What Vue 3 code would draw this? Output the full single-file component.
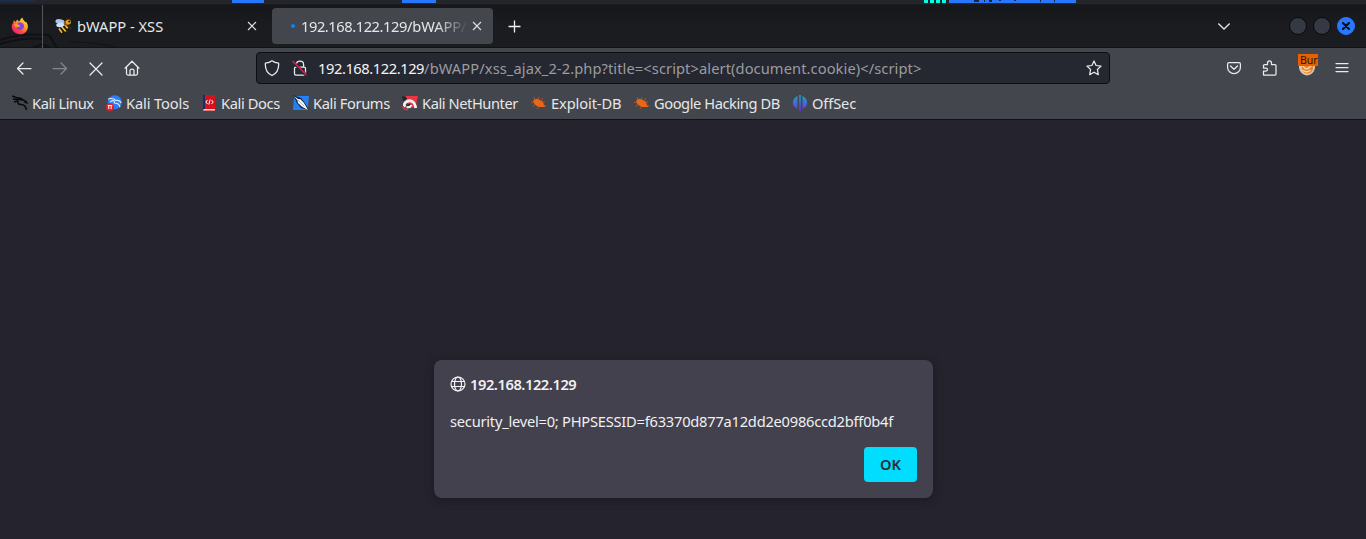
<script setup>
const bookmarks = [
  { icon: 'dragon', label: 'Kali Linux', fit: 'snug' },
  { icon: 'tools', label: 'Kali Tools', fit: 'normal' },
  { icon: 'docs', label: 'Kali Docs', fit: 'medium' },
  { icon: 'forums', label: 'Kali Forums', fit: 'medium' },
  { icon: 'hunter', label: 'Kali NetHunter', fit: 'snug' },
  { icon: 'bug', label: 'Exploit-DB', fit: 'normal' },
  { icon: 'bug', label: 'Google Hacking DB', fit: 'snug' },
  { icon: 'offsec', label: 'OffSec', fit: 'normal' },
]
const address = '/bWAPP/xss_ajax_2-2.php?title=<script>alert(document.cookie)<\/script>'
</script>

<template>
  <div class="screen">
    <div class="panel">
      <i class="glow"></i>
      <i class="task first"></i>
      <i class="task second"></i>
      <i class="meter"></i>
      <i class="tray"></i>
    </div>

    <header class="tabs">
      <svg class="wallpaper" width="130" height="43" viewBox="0 0 130 43" fill="none">
        <path d="M0 35Q22 28 49 30L57 43M0 39Q25 32 43 34M32 43L42 39L50 43" stroke="#101114" stroke-width="2" />
        <path d="M70 37Q98 37 119 43" stroke="#121317" />
      </svg>
      <div class="pinned">
        <svg width="18" height="18" viewBox="0 0 18 18">
          <defs>
            <linearGradient id="flame" x1="1" y1="0" x2=".2" y2="1">
              <stop offset="0" stop-color="#fff44f" /><stop offset=".4" stop-color="#ffa52c" />
              <stop offset=".7" stop-color="#ff4a45" /><stop offset="1" stop-color="#e9187e" />
            </linearGradient>
          </defs>
          <path d="M3 3.3L4.6 5C5 4 6 2.7 6.6 2.4C6.8 3.5 7.6 4.2 8.6 4.3C9 3 10 1.4 11.4.6C11.6 2.6 13.2 3.5 14 5L15 4.7C17.8 8.3 17.3 12.2 15 14.7C11.7 18.2 5.9 18 2.8 14.8C0 11.9.6 7.9 1.7 6.2L2 7Q2.2 4.5 3 3.3Z" fill="url(#flame)" />
          <path d="M7 5.8C11.5 4.8 13.7 7.4 12.8 10.3C11.8 13.7 6.6 13.7 5.1 10.6L8.8 9.7C9.8 8.4 8.6 7.8 6.5 7.7Z" fill="#8147d7" />
          <path d="M3.2 7.2Q5.7 6 7.7 8Q9.1 8.8 8.5 9.6L6 10.2Q4.6 10.3 3.8 9Z" fill="#ff9827" />
        </svg>
      </div>
      <div class="tab">
        <svg width="18" height="18" viewBox="0 0 18 18">
          <path d="M3.5 12L4 15.5L8 16.3L12 14L13.5 10L10 6L5 9Z" fill="#17150f" />
          <path d="M4 11.5L7 15.7M6.5 9.5L10.7 14.3M9.5 7.5L12.8 11.3" stroke="#f5b526" stroke-width="1.8" />
          <ellipse cx="5" cy="4.7" rx="4.7" ry="2.5" transform="rotate(10 5 4.7)" fill="#a9c4ef" />
          <ellipse cx="5.2" cy="8" rx="4" ry="2.3" transform="rotate(-8 5 8)" fill="#cfe0fa" />
          <circle cx="11.4" cy="6" r="2.6" fill="#8b5c17" />
          <circle cx="13.4" cy="5" r="2.5" fill="#e5a120" />
          <path d="M11.5 1.5L12.5 3M14.8 2.3L16 1.5M13.5 10L15.5 10L16 12.5M11 14L13 15" stroke="#4b350f" stroke-width=".9" fill="none" />
          <circle cx="14.2" cy="4.5" r="1" fill="#221b0c" />
        </svg>
        <span class="tab-label">bWAPP - XSS</span>
        <svg class="close" width="10" height="10" viewBox="0 0 10 10"><path d="M1 1L9 9M9 1L1 9" stroke="#e0e0e2" stroke-width="1.1" /></svg>
      </div>
      <div class="tab active">
        <i class="loading"></i>
        <span class="tab-label fade"><span class="ip">192.168.122.129</span>/bWAPP/x</span>
        <svg class="close" width="10" height="10" viewBox="0 0 10 10"><path d="M1 1L9 9M9 1L1 9" stroke="#e0e0e2" stroke-width="1.1" /></svg>
      </div>
      <svg class="plus" width="13" height="13" viewBox="0 0 13 13"><path d="M6.5.5V12.5M.5 6.5H12.5" stroke="#f0f0f1" stroke-width="1.3" /></svg>
      <svg class="chevron" width="14" height="9" viewBox="0 0 14 9" fill="none"><path d="M1.3 1.5L7 7L12.7 1.5" stroke="#e4e4e6" stroke-width="1.3" /></svg>
      <div class="window-buttons">
        <i></i><i></i>
        <i class="exit"><svg width="8" height="8" viewBox="0 0 8 8"><path d="M1 1L7 7M7 1L1 7" stroke="#08101d" stroke-width="2.2" stroke-linecap="round" /></svg></i>
      </div>
    </header>

    <nav class="toolbar">
      <div class="navigation">
        <svg width="16" height="16" viewBox="0 0 16 16"><path d="M15 8.5H1.5M7 3L1.5 8.5L7 14" /></svg>
        <svg class="disabled" width="16" height="16" viewBox="0 0 16 16"><path d="M1 8.5H14.5M9 3L14.5 8.5L9 14" /></svg>
        <svg width="16" height="16" viewBox="0 0 16 16"><path d="M2 3L14 15M14 3L2 15" /></svg>
        <svg width="16" height="16" viewBox="0 0 16 16"><path d="M1 8.2L8 1.2L15 8.2M2.5 7V13.5Q2.5 15 4 15H12Q13.5 15 13.5 13.5V7M6 15V10.5Q6 9 8 9Q10 9 10 10.5V15" /></svg>
      </div>
      <div class="address">
        <svg width="16" height="16" viewBox="0 0 16 16"><path d="M8 .8Q10.5 2.8 14.6 3.1C15 8 13.1 13.2 8 15.5C2.9 13.2 1 8 1.4 3.1Q5.5 2.8 8 .8Z" /></svg>
        <svg class="lock" width="16" height="16" viewBox="0 0 16 16">
          <path d="M4.4 7V4.4Q4.4 1 8 1Q11.6 1 11.6 4.4V7M3.8 7H12.2Q13.5 7 13.5 8.3V13.7Q13.5 15 12.2 15H3.8Q2.5 15 2.5 13.7V8.3Q2.5 7 3.8 7Z" />
          <path d="M1 2L14 15" class="shade" /><path d="M1 1.5L14 14.5" class="slash" />
        </svg>
        <span class="url"><b class="ip">192.168.122.129</b>{{ address }}</span>
        <svg class="star" width="16" height="16" viewBox="0 0 16 16"><path d="M8 1L10.1 5.5L15 6.1L11.4 9.5L12.3 14.7L8 12.2L3.7 14.7L4.6 9.5L1 6.1L5.9 5.5Z" /></svg>
      </div>
      <div class="extensions">
        <svg width="16" height="16" viewBox="0 0 16 16"><path d="M3 2.5H13Q14.4 2.5 14.4 4V7.5A6.4 6.1 0 0 1 1.6 7.5V4Q1.6 2.5 3 2.5ZM4.5 6L8 9.3L11.5 6" /></svg>
        <svg width="16" height="16" viewBox="0 0 16 16"><path d="M1.5 15V11H4Q5.5 11 5.5 9.5T4 8H1.5V5.5Q1.5 4.5 2.5 4.5H5.5V3Q5.5.8 7.5.8T9.5 3V4.5H13Q14 4.5 14 5.5V14Q14 15 13 15Z" /></svg>
        <span class="fox">
          <svg width="18" height="18" viewBox="0 0 18 18">
            <path d="M1 5H17V9Q15.5 16 9 16.5Q2.5 16 1 9Z" class="fur" />
            <path d="M4 5H15V10Q13.5 14.5 9 14.5Q5 14 4 10Z" class="face" />
            <path d="M5 7L7 9.5H10L13 7M5 11.5Q9 14 12 11.5" class="stripe" />
          </svg>
          <em>Bur</em>
        </span>
        <svg width="16" height="16" viewBox="0 0 16 16"><path d="M2 3.5H14M2 7.5H14M2 11.5H14" /></svg>
      </div>
    </nav>

    <nav class="bookmarks">
      <a v-for="b in bookmarks" :key="b.label">
        <svg width="16" height="16" viewBox="0 0 16 16">
          <g v-if="b.icon === 'dragon'" fill="none" stroke="#08090b">
            <path d="M0 1L4 2.4L9 3.5L12 5.5M1 4L5 4.3L9 4.5M2 7L6 5.6Q5 9.5 9 9.5Q13.5 9.5 14.5 15" stroke-width="1.5" />
            <path d="M9 5Q13 4 15 8L12 7" stroke-width="1.3" />
          </g>
          <g v-else-if="b.icon === 'tools'">
            <circle cx="8.8" cy="7.3" r="7" fill="#2d7df6" />
            <path d="M2 4Q7 2.5 10 5.5Q14 5 15 8M4 7Q9 4 8.5 8Q13 8 14 12" fill="none" stroke="#d9eaff" stroke-width="1.2" />
            <circle cx="4" cy="12" r="4" fill="#e3202c" />
            <path d="M2.8 14V10.5H5.2V14M1.8 10.5H6.2" stroke="#fff" fill="none" />
          </g>
          <g v-else-if="b.icon === 'docs'">
            <path d="M2 0H14V16H2Z" fill="#d5131e" /><path d="M2 0H4V14H2Z" fill="#1d2c65" />
            <path d="M3 14H14V15.5H2Z" fill="#dedede" />
            <path d="M6.5 5L4.8 7L6.5 9M10.5 5L12.2 7L10.5 9M9.2 4.5L7.8 9.5" stroke="#fff" fill="none" />
          </g>
          <g v-else-if="b.icon === 'forums'">
            <path d="M1 1H16L14.5 15H0Z" fill="#2680f5" />
            <path d="M0 0L8 3L12 8L16 15L8 13L4 8Z" fill="#182437" />
            <path d="M1 1L5 4L7.5 4.3L11 8L15 15L9 11.8L5 8L4.5 5.5Z" fill="#f3f5f7" />
            <path d="M5 5L11 11" stroke="#8d99a7" stroke-width=".7" />
          </g>
          <g v-else-if="b.icon === 'hunter'">
            <path d="M4 1L16 1L13.5 12L9 13L3 4Z" fill="#ee3342" />
            <path d="M0 1L4 2L5 4L1 6Z" fill="#252529" />
            <path d="M3 12Q1 9 4.5 6.8Q8 4.5 11 7Q13 8.5 13.8 13" fill="none" stroke="#f2f2f2" stroke-width="2.8" />
            <path d="M4.5 12Q8 13 9.5 10" fill="none" stroke="#f2f2f2" stroke-width="2" />
            <path d="M5 9.7Q7.5 8 9 9Q8 11 5.5 11Z" fill="#4a1c24" />
            <path d="M1 11Q1.5 15 6 14.5" fill="none" stroke="#df3340" stroke-width="1.7" />
          </g>
          <g v-else-if="b.icon === 'bug'">
            <path d="M2 6Q4 2.5 8 4.5L12 7L14 12L8 12Q3 10 2 6Z" fill="#ef6513" />
            <path d="M4 6L3 2M7 5L8 2M2 8L0 7M4 9L2 12M8 11L6 14M10 6L12 3M11 7L14 7M12 10L15.5 11" stroke="#b85c29" stroke-width=".8" />
          </g>
          <g v-else>
            <defs><linearGradient id="offsec" x2="0" y2="1"><stop stop-color="#1fa4c5" /><stop offset="1" stop-color="#6534dd" /></linearGradient></defs>
            <path d="M5.5 1V14Q1 12 .8 7.5Q1 3 5.5 1ZM7.2 0H8.8V16H7.2ZM10.5 1Q15 3 15.2 7.5Q15 12 10.5 14Z" fill="url(#offsec)" />
          </g>
        </svg>
        <span :class="b.fit">{{ b.label }}</span>
      </a>
    </nav>

    <main>
      <section class="dialog">
        <h1>
          <svg width="16" height="16" viewBox="0 0 16 16" fill="none" stroke="#f3f3f6" stroke-width="1.2"><circle cx="8" cy="8" r="7" /><ellipse cx="8" cy="8" rx="3.5" ry="7" /><path d="M1.6 5.5H14.4M1.6 10.5H14.4" /></svg>
          <span class="ip">192.168.122.129</span>
        </h1>
        <p>security_level=0; PHPSESSID=f63370d877a12dd2e0986ccd2bff0b4f</p>
        <button>OK</button>
      </section>
    </main>
  </div>
</template>

<style>
body { margin: 0; background: #25232d; }
</style>

<style scoped>
* { box-sizing: border-box; }
svg { display: block; flex: none; }
.screen { width: 1366px; height: 539px; display: flex; flex-direction: column; overflow: hidden; background: #25232d; color: #e6e7e9; font: 14.67px/20px "Noto Sans", sans-serif; }
.ip { letter-spacing: -.43px; }
.panel { height: 5px; display: flex; background: #23252b; border-bottom: 1px solid #1b1c21; flex: none; }
.glow { width: 34px; height: 2px; background: #172c50; }
.task { height: 3px; background: #2777ff; }
.first { width: 32px; margin-left: 198px; }
.second { width: 34px; margin-left: 138px; }
.meter { width: 22px; height: 3px; margin-left: 488px; background: repeating-linear-gradient(90deg, #00ffe1 0 4px, transparent 4px 6px); }
.tray { width: 127px; height: 3px; margin-left: 3px; background: linear-gradient(#23252b, #23252b) 25px 0/5px 2px no-repeat, linear-gradient(#23252b, #23252b) 35px 0/1px 2px no-repeat, linear-gradient(#23252b, #23252b) 40px 0/3px 2px no-repeat, linear-gradient(#23252b, #23252b) 50px 0/2px 1px no-repeat, linear-gradient(#23252b, #23252b) 65px 0/2px 1px no-repeat, linear-gradient(#23252b, #23252b) 91px 0/1px 2px no-repeat, linear-gradient(#23252b, #23252b) 105px 0/1px 2px no-repeat, #2777ff; }
.tabs { position: relative; height: 43px; display: flex; align-items: center; background: linear-gradient(#16171a, #1b1c20 55%); border-bottom: 1px solid #111217; flex: none; }
.wallpaper { position: absolute; left: 0; top: 0; }
.pinned { position: relative; width: 43px; height: 43px; padding: 12px 0 0 11px; border-right: 1px solid #555659; }
.tab { width: 221px; height: 36px; margin-left: 4px; display: flex; align-items: center; padding: 0 11px 0 8px; border-radius: 4px; position: relative; }
.tab-label { flex: 1; min-width: 0; margin-left: 4px; white-space: nowrap; }
.tab.active { background: #43464c; padding-left: 19px; }
.loading { width: 4px; height: 4px; flex: none; border-radius: 50%; background: #0a84ff; }
.tab-label.fade { margin-left: 6px; margin-right: 4px; letter-spacing: -.1px; mask-image: linear-gradient(90deg, #000 calc(100% - 32px), transparent 100%); }
.plus { margin-left: 15px; }
.chevron { margin-left: auto; }
.window-buttons { display: flex; gap: 6px; margin: 0 11px 0 58px; }
.window-buttons i { width: 18px; height: 18px; border-radius: 50%; border: 1px solid #08090b; background: #343943; display: grid; place-items: center; }
.window-buttons .exit { background: #2777ff; border-color: #2777ff; }
.toolbar { height: 40px; padding-top: 4px; display: flex; align-items: flex-start; background: #43464c; flex: none; }
.navigation { width: 256px; height: 32px; padding-left: 16px; display: flex; align-items: center; gap: 20px; }
.toolbar svg { fill: none; stroke: #ebebed; stroke-width: 1.25; stroke-linecap: round; stroke-linejoin: round; }
.toolbar .disabled { stroke: #85878b; }
.address { width: 854px; height: 32px; padding: 0 7px; display: flex; align-items: center; background: #262831; border: 1px solid #0d0e12; border-radius: 4px; }
.lock { margin-left: 12px; }
.toolbar .shade { stroke: #262831; stroke-width: 3; }
.toolbar .slash { stroke: #e21f51; stroke-width: 1.4; }
.url { margin-left: 10px; color: #9b9ca0; white-space: nowrap; letter-spacing: .09px; }
.url b { color: #f4f4f5; font-weight: 400; letter-spacing: -.42px; }
.star { margin-left: auto; }
.extensions { height: 32px; padding-left: 116px; display: flex; align-items: center; gap: 20px; }
.fox { position: relative; width: 18px; height: 18px; margin: 0 -1px 0 0; }
.fox + svg { margin-left: -1px; }
.toolbar .fur { fill: #d9c6b5; stroke: none; }
.toolbar .face { fill: #e9852a; stroke: none; }
.toolbar .stripe { stroke: #ffd5a8; }
.fox em { position: absolute; left: 0; top: -5px; width: 20px; height: 12px; background: #e66000; color: #321300; font: 10.5px/12px "Noto Sans", sans-serif; padding-left: 2px; }
.bookmarks { height: 32px; padding: 0 0 1px 12px; display: grid; grid-template-columns: 94px 95px 92px 109px 129px 103px 158px 90px; align-items: center; background: #43464c; border-bottom: 1px solid #111217; flex: none; }
.bookmarks a { display: flex; align-items: center; gap: 4px; white-space: nowrap; }
.snug { letter-spacing: -.43px; }
.medium { letter-spacing: -.38px; }
.normal { letter-spacing: -.12px; }
main { flex: 1; display: flex; justify-content: center; align-items: flex-start; padding-top: 240px; padding-left: 1px; background: #25232d; }
.dialog { width: 499px; height: 138px; padding: 14px 16px; display: flex; flex-direction: column; background: #43414d; border-radius: 8px; box-shadow: 0 2px 10px #1b1a22; color: #f0f0f3; }
h1 { height: 20px; margin: 0; display: flex; align-items: center; gap: 4px; font-size: 14.67px; font-weight: 600; }
p { margin: 17px 0 16px; white-space: nowrap; height: 20px; letter-spacing: -.23px; }
button { align-self: flex-end; width: 53px; height: 35px; border: 0; border-radius: 4px; padding: 0 0 2px; background: #00ddff; color: #2b2a33; font: 600 14.67px "Noto Sans", sans-serif; }
</style>
